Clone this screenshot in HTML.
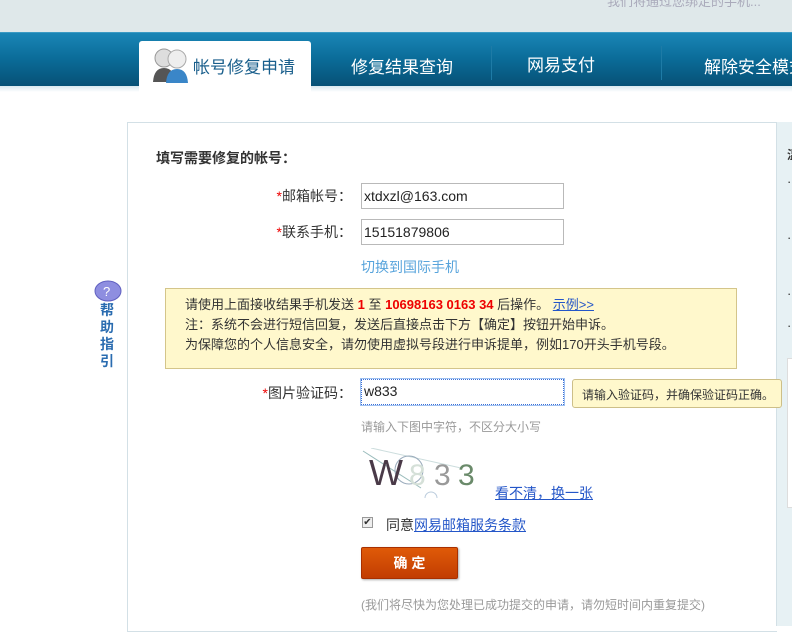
<!DOCTYPE html>
<html><head><meta charset="utf-8"><style>
*{margin:0;padding:0;box-sizing:border-box}
body{width:792px;height:626px;overflow:hidden;background:#fff;font-family:"Liberation Sans","Noto Sans CJK SC",sans-serif;font-size:13px;color:#333;position:relative}
.a{position:absolute;white-space:nowrap}
.top{left:0;top:0;width:792px;height:32px;background:#dfe8ea}
.nav{left:0;top:32px;width:792px;height:56px;background:linear-gradient(#1a86b6,#0b6d9a 45%,#064f73);border-top:1px solid #3a9ac4}
.navb{left:0;top:86px;width:792px;height:6px;background:linear-gradient(#d8e8ef,#fff)}
.tab{left:139px;top:41px;width:172px;height:51px;background:#fff;border-radius:3px 3px 0 0}
.nt{color:#fff;font-size:17px;top:53px;letter-spacing:0}
.sep{top:46px;width:1px;height:34px;background:#1e7ba6}
.panel{left:127px;top:122px;width:650px;height:510px;border:1px solid #d3e0e6;border-right:none}
.side{left:776px;top:122px;width:16px;height:504px;background:#e7f1f4;border-left:1px solid #d3e0e6}
.lbl{font-size:14px;color:#333;text-align:right;width:120px}
.lbl i{color:#e00;font-style:normal}
.inp{width:203px;height:26px;border:1px solid #b9b9b9;font-size:14px;padding:4px 0 0 2px;color:#222}
.red{color:#e00;font-weight:bold}
a{color:#2456c8;text-decoration:underline}
</style></head><body>
<div class="a top"><div class="a" style="left:607px;top:-9px;color:#aab;font-size:13px">我们将通过您绑定的手机...</div></div>
<div class="a nav"></div>
<div class="a navb"></div>
<div class="a tab"></div>
<svg class="a" style="left:151px;top:46px" width="40" height="38">
<circle cx="13" cy="12" r="9" fill="#ddd" stroke="#999"/><path d="M2 36 Q3 22 13 22 Q23 22 24 36Z" fill="#555"/>
<circle cx="26" cy="13" r="9" fill="#eee" stroke="#aaa"/><path d="M15 37 Q16 23 26 23 Q36 23 37 37Z" fill="#3a86c8"/>
</svg>
<div class="a" style="left:193px;top:53px;font-size:17px;color:#1a5f8c">帐号修复申请</div>
<div class="a nt" style="left:351px">修复结果查询</div>
<div class="a sep" style="left:491px"></div>
<div class="a nt" style="left:527px;top:51px">网易支付</div>
<div class="a sep" style="left:661px"></div>
<div class="a nt" style="left:704px">解除安全模式</div>
<div class="a panel"></div>
<div class="a side"><div class="a" style="left:10px;top:24px;font-size:12px;font-weight:bold">温</div>
<div class="a" style="left:10px;top:52px">·</div><div class="a" style="left:10px;top:108px">·</div><div class="a" style="left:10px;top:164px">·</div><div class="a" style="left:10px;top:196px">·</div>
<div class="a" style="left:10px;top:236px;width:8px;height:150px;background:#fff;border:1px solid #ddd"></div></div>
<div class="a" style="left:156px;top:148px;font-size:14px;font-weight:bold;color:#333">填写需要修复的帐号：</div>
<div class="a lbl" style="left:232px;top:186px"><i>*</i>邮箱帐号：</div>
<div class="a inp" style="left:361px;top:183px">xtdxzl@163.com</div>
<div class="a lbl" style="left:232px;top:222px"><i>*</i>联系手机：</div>
<div class="a inp" style="left:361px;top:219px">15151879806</div>
<div class="a" style="left:361px;top:257px;color:#58a4dc;font-size:14px">切换到国际手机</div>
<svg class="a" style="left:94px;top:280px" width="30" height="24"><ellipse cx="14" cy="11" rx="13" ry="10" fill="#8e8ee0" stroke="#6060c0"/><text x="9" y="16" font-size="13" fill="#fff" font-family="Liberation Sans">?</text></svg>
<div class="a" style="left:100px;top:302px;width:16px;font-size:14px;font-weight:bold;color:#2a6cb0;line-height:17px;white-space:normal">帮助指引</div>
<div class="a" style="left:165px;top:288px;width:572px;height:81px;background:#fff8cc;border:1px solid #d4c58a"></div>
<div class="a" style="left:185px;top:295px;line-height:20px;font-size:13px;color:#333">请使用上面接收结果手机发送 <span class="red">1</span> 至 <span class="red">10698163 0163 34</span> 后操作。 <a>示例&gt;&gt;</a><br>注：系统不会进行短信回复，发送后直接点击下方【确定】按钮开始申诉。<br>为保障您的个人信息安全，请勿使用虚拟号段进行申诉提单，例如170开头手机号段。</div>
<div class="a lbl" style="left:232px;top:383px"><i>*</i>图片验证码：</div>
<div class="a inp" style="left:361px;top:379px;border:1px dotted #3a6fd8;box-shadow:0 0 0 1px #9ec0f0;padding-top:3px">w833</div>
<div class="a" style="left:572px;top:379px;width:210px;height:29px;background:#fff8cc;border:1px solid #cdbf88;border-radius:3px;font-size:12px;padding:6px 0 0 9px">请输入验证码，并确保验证码正确。</div>
<div class="a" style="left:361px;top:418px;color:#999;font-size:12px">请输入下图中字符，不区分大小写</div>
<svg class="a" style="left:361px;top:448px" width="125" height="50">
<line x1="2" y1="3" x2="60" y2="40" stroke="#9bb" /><line x1="10" y1="0" x2="100" y2="20" stroke="#cdd"/>
<circle cx="48" cy="22" r="14" fill="none" stroke="#9ab"/><circle cx="70" cy="50" r="6" fill="none" stroke="#bcd"/>
<text x="8" y="37" font-size="36" fill="#4a3a48" font-family="Liberation Sans">W</text>
<text x="48" y="37" font-size="30" fill="#d5e0d8" font-family="Liberation Sans">8</text>
<text x="73" y="37" font-size="30" fill="#999" font-family="Liberation Sans">3</text>
<text x="97" y="37" font-size="30" fill="#6a8a6a" font-family="Liberation Sans">3</text></svg>
<a class="a" style="left:495px;top:483px;font-size:14px">看不清，换一张</a>
<div class="a" style="left:362px;top:517px;width:11px;height:11px;border:1px solid #999;background:#eee;font-size:10px;line-height:9px;text-align:center">✔</div>
<div class="a" style="left:386px;top:515px;font-size:14px">同意<a>网易邮箱服务条款</a></div>
<div class="a" style="left:361px;top:547px;width:97px;height:32px;background:linear-gradient(#e05a08,#c23d02);border:1px solid #a83000;border-radius:2px;color:#fff;font-weight:bold;font-size:14px;text-align:center;line-height:30px;box-shadow:1px 1px 2px #aaa">确 定</div>
<div class="a" style="left:361px;top:596px;color:#999;font-size:12px">(我们将尽快为您处理已成功提交的申请，请勿短时间内重复提交)</div>
</body></html>
